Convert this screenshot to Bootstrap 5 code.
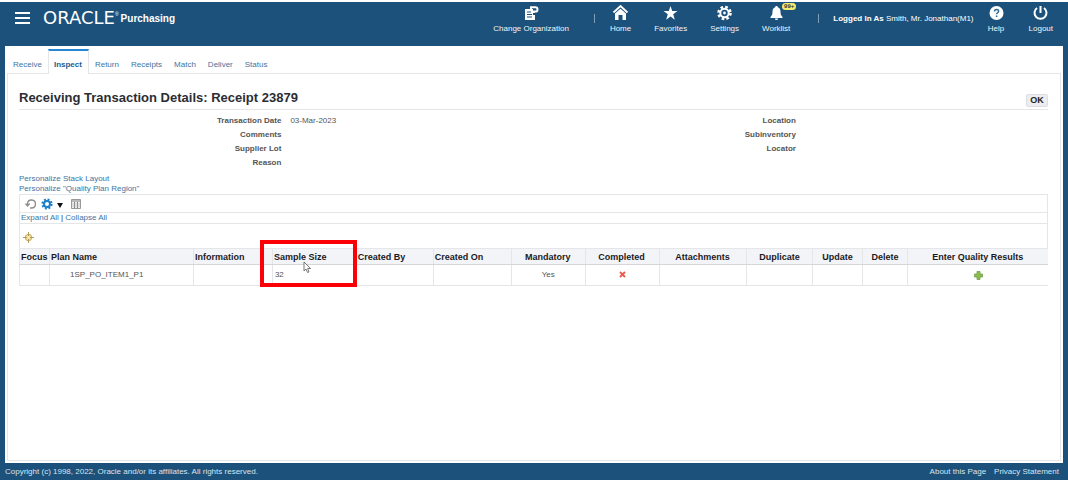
<!DOCTYPE html>
<html lang="en">
<head>
<meta charset="utf-8">
<meta name="viewport" content="width=device-width, initial-scale=1">
<title>Oracle Purchasing - Receiving Transaction Details</title>
<link href="https://cdn.jsdelivr.net/npm/bootstrap@5.3.0/dist/css/bootstrap.min.css" rel="stylesheet">
<style>
  body { font-family: "Liberation Sans", Arial, sans-serif; font-size: 8px; line-height: 10px; color: #555; background: #1c517b; border-top: 2px solid #fff; }
  a { color: #3f749f; text-decoration: none; }
  .topbar { height: 44px; padding: 0 15px; color: #fff; }
  .topbar a { color: #f0f5f9; }
  .menu-btn { width: 15px; height: 12px; border: 0; background: none; margin-top: 10px; }
  .wordmark { font: 18px/20px "DejaVu Sans", Verdana, sans-serif; margin: 6px 0 0 13px; }
  .reg { font-size: 5px; line-height: 5px; margin-top: 10px; }
  .product { font-size: 10px; line-height: 20px; font-weight: bold; margin: 7px 0 0 2px; }
  .actions { gap: 23px; }
  .action { display: flex; flex-direction: column; align-items: center; position: relative; padding-top: 2px; }
  .action svg { margin-bottom: 3px; }
  .divider { width: 1px; height: 9px; background: #7f9db5; margin: 12px -8px 0 2px; }
  .divider:last-child { margin: 12px 0 0 5px; }
  .count { position: absolute; left: 20px; top: 1px; font-size: 6px; line-height: 7px; font-weight: bold; padding: 0 2px; background: #f3ec6c; color: #333; border-radius: 4px; }
  .user { padding-top: 12px; margin: 0 14px; }
  .panel { background: #fff; margin: 0 5px; padding: 3px 2px 2px; }
  .tabs { padding-left: 6px; position: relative; z-index: 1; }
  .tabs a { display: block; height: 25px; padding-top: 11px; margin-right: 12px; }
  .tabs a.current { font-weight: bold; color: #1d5e93; border: 1px solid #e3e6e8; border-top: 2px solid #2688d4; border-bottom: 0; background: #fff; padding: 9px 6px 0 5px; margin: 0 6px 0 -6px; }
  .content { border: 1px solid #e4e7ea; padding: 15px 12px 0 11px; margin-top: -1px; }
  .heading { border-bottom: 1px solid #e6e6e6; height: 21px; }
  .heading h1 { font-size: 13px; line-height: 18px; font-weight: bold; color: #2b2d33; margin: 0; }
  .ok-btn { font-size: 9px; line-height: 11px; font-weight: bold; color: #222; background: #ebedf0; border: 1px solid #dcdee1; border-radius: 2px; width: 22px; height: 13px; padding: 0; margin-top: 5px; }
  .facts { padding-top: 4px; min-height: 64px; }
  .facts dl { margin: 0; width: 50%; display: grid; grid-template-columns: 51% 1fr; column-gap: 9px; grid-auto-rows: 14px; align-content: start; line-height: 14px; }
  .facts dt { text-align: right; font-weight: bold; }
  .facts dd { margin: 0; }
  .region { border: 1px solid #e4e6e8; border-bottom: 0; }
  .tools { height: 17px; padding-left: 5px; }
  .icon-btn { border: 0; background: none; padding: 0; display: flex; }
  .expand { border: solid #e4e6e8; border-width: 1px 0; height: 12px; padding-left: 1px; color: #222; }
  .focus-row { height: 24px; padding: 3px 0 0 3px; }
  .plans { width: 100%; table-layout: fixed; border-left: 1px solid #e4e6e8; }
  .plans th { font-size: 9px; height: 16px; padding: 0 2px 0 1px; color: #1b1b1f; background: #f3f4f8; border: 1px solid #e4e6ea; border-bottom-color: #d4d6da; border-width: 1px 0 1px 1px; white-space: nowrap; }
  .plans td { height: 21px; padding: 0 2px; border: 1px solid #e4e6e8; border-width: 0 0 1px 1px; }
  .plans th.c, .plans td.c { text-align: center; }
  .plans td.name { padding-left: 20px; }
  .marked { position: relative; }
  .highlight { position: absolute; left: -13px; top: -9px; width: 97px; height: 47px; border: 4px solid #fb0007; }
  .pointer { position: absolute; left: 30px; top: 12px; }
  .foot { height: 17px; padding: 4px 9px 0 5px; color: #d8e4ee; }
  .foot a { color: #d8e4ee; }
</style>
</head>
<body class="d-flex flex-column min-vh-100">
<header class="topbar d-flex align-items-start">
  <button class="menu-btn p-0 d-flex" type="button" aria-label="Menu">
    <svg width="15" height="12" viewBox="0 0 15 12" fill="#fff"><path d="M0 0h15v2H0zM0 5h15v2H0zM0 10h15v2H0z"/></svg>
  </button>
  <span class="wordmark">ORACLE</span><span class="reg">®</span><span class="product">Purchasing</span>
  <nav class="actions d-flex ms-auto">
    <a class="action" href="#">
      <svg width="17" height="17" viewBox="0 0 17 17"><path fill="#fff" d="M2 5h8v6h2v5H2z"/><path d="M4 8h4M4 10.500h5M4 13h5" stroke="#1c517b"/><path d="M8 5.500V3.200h4.300a2.200 2.200 0 0 1 0 4.400h-1.500V9" fill="none" stroke="#fff" stroke-width="2"/></svg>
      Change Organization</a>
    <span class="divider"></span>
    <a class="action" href="#">
      <svg width="17" height="17" viewBox="0 0 17 17"><path d="M1.500 8.500 8.500 2l7 6.500" fill="none" stroke="#fff" stroke-width="1.800"/><path fill="#fff" d="M3 9.500 8.500 4.800 14 9.500V16h-3.500v-5h-4v5H3z"/></svg>
      Home</a>
    <a class="action" href="#">
      <svg width="17" height="17" viewBox="0 0 17 17"><path fill="#fff" d="m8.500 2 1.700 5h5.300l-4.300 3.300 1.600 5.400-4.300-3.200-4.300 3.200 1.600-5.400L1.500 7h5.300z"/></svg>
      Favorites</a>
    <a class="action" href="#">
      <svg width="17" height="17" viewBox="0 0 17 17"><circle cx="8.500" cy="9" r="6" fill="none" stroke="#fff" stroke-width="2.600" stroke-dasharray="2.600 2.112"/><circle cx="8.500" cy="9" r="4.200" fill="none" stroke="#fff" stroke-width="2"/><circle cx="8.500" cy="9" r="1.400" fill="#fff"/></svg>
      Settings</a>
    <a class="action" href="#">
      <svg width="17" height="17" viewBox="0 0 17 17"><path fill="#fff" d="M8.500 2c1 0 1.300.7 1.300 1.300 2.200.8 2.700 2.500 2.700 4.200 0 2.500.5 4 2 5.500v1h-12v-1c1.500-1.500 2-3 2-5.500 0-1.700.5-3.400 2.700-4.200C7.200 2.700 7.500 2 8.500 2zM7 14.600h3c0 2-3 2-3 0z"/></svg>
      Worklist<span class="count">99+</span></a>
    <span class="divider"></span>
  </nav>
  <span class="user"><b>Logged In As</b> Smith, Mr. Jonathan(M1)</span>
  <nav class="d-flex gap-4">
    <a class="action" href="#">
      <svg width="17" height="17" viewBox="0 0 17 17"><circle cx="8.500" cy="9" r="7" fill="#fff"/><path d="M6.600 7.500c0-2.600 4-2.600 4-.2 0 1.500-2 1.400-2 3M8.600 11.600v1.500" fill="none" stroke="#2b689a" stroke-width="1.500"/></svg>
      Help</a>
    <a class="action" href="#">
      <svg width="17" height="17" viewBox="0 0 17 17" fill="none" stroke="#fff" stroke-width="2"><path d="M5 4a6 6 0 1 0 7 0M8.500 2v7"/></svg>
      Logout</a>
  </nav>
</header>

<main class="panel flex-grow-1 d-flex flex-column">
  <nav class="tabs d-flex">
    <a href="#">Receive</a>
    <a href="#" class="current" aria-current="page">Inspect</a>
    <a href="#">Return</a>
    <a href="#">Receipts</a>
    <a href="#">Match</a>
    <a href="#">Deliver</a>
    <a href="#">Status</a>
  </nav>
  <section class="content flex-grow-1">
    <div class="heading d-flex justify-content-between">
      <h1>Receiving Transaction Details: Receipt 23879</h1>
      <button class="ok-btn" type="button">OK</button>
    </div>
    <div class="facts d-flex">
      <dl>
        <dt>Transaction Date</dt><dd>03-Mar-2023</dd>
        <dt>Comments</dt><dd></dd>
        <dt>Supplier Lot</dt><dd></dd>
        <dt>Reason</dt><dd></dd>
      </dl>
      <dl>
        <dt>Location</dt><dd></dd>
        <dt>Subinventory</dt><dd></dd>
        <dt>Locator</dt><dd></dd>
      </dl>
    </div>
    <div class="d-flex flex-column align-items-start">
      <a href="#">Personalize Stack Layout</a>
      <a href="#">Personalize "Quality Plan Region"</a>
    </div>
    <div class="region">
      <div class="tools d-flex align-items-center gap-1">
        <button class="icon-btn" type="button" aria-label="Reset"><svg width="12" height="12" viewBox="0 0 12 12" fill="none" stroke="#8c8c8c" stroke-width="1.300"><path d="M2.500 7V5.500a4 4 0 1 1 4 4.500H5"/><path d="m.5 5.500 2 2.500 2.200-2.500"/></svg></button>
        <button class="icon-btn" type="button" aria-label="Table settings"><svg width="12" height="12" viewBox="0 0 12 12"><circle cx="6" cy="6" r="4.500" fill="none" stroke="#1b7fca" stroke-width="2.200" stroke-dasharray="1.900 1.634"/><circle cx="6" cy="6" r="3" fill="none" stroke="#1b7fca" stroke-width="2"/></svg></button>
        <button class="icon-btn" type="button" aria-label="More settings"><svg width="6" height="12" viewBox="0 0 6 12"><path d="M0 5h6L3 10z" fill="#111"/></svg></button>
        <button class="icon-btn ms-1" type="button" aria-label="Columns"><svg width="10" height="10" viewBox="0 0 10 10"><path d="M.5.500h9v9h-9z" fill="#ececec" stroke="#999"/><path d="M1 2h8M3.500 3v6M6.500 3v6" stroke="#888"/><path d="M1 5h8M1 7h8" stroke="#bbb" stroke-width=".5"/></svg></button>
      </div>
      <div class="expand"><a href="#">Expand All</a> | <a href="#">Collapse All</a></div>
      <div class="focus-row d-flex align-items-center">
        <button class="icon-btn" type="button" aria-label="Focus"><svg width="11" height="11" viewBox="0 0 11 11"><circle cx="5.500" cy="5.500" r="3.200" fill="#f3e5ad" stroke="#c8a84d"/><path d="M5.500 0v4M5.500 7v4M0 5.500h4M7 5.500h4" stroke="#b59c55"/></svg></button>
      </div>
    </div>
    <table class="plans">
      <colgroup>
        <col style="width:2.92%"><col style="width:13.99%"><col style="width:7.68%"><col style="width:8.16%"><col style="width:7.48%"><col style="width:7.58%"><col style="width:7.19%"><col style="width:7.19%"><col style="width:8.55%"><col style="width:6.41%"><col style="width:4.86%"><col style="width:4.38%"><col style="width:13.61%">
      </colgroup>
      <thead>
        <tr><th>Focus</th><th>Plan Name</th><th>Information</th>
          <th class="marked">Sample Size<span class="highlight"></span>
            <svg class="pointer" width="9" height="13" viewBox="0 0 9 13"><path d="M1 1v9l2-2 1.500 3.500 1.500-.7L4.600 7.500h3z" fill="#fff" stroke="#555" stroke-width=".8"/></svg></th>
          <th>Created By</th><th>Created On</th><th class="c">Mandatory</th><th class="c">Completed</th><th class="c">Attachments</th><th class="c">Duplicate</th><th class="c">Update</th><th class="c">Delete</th><th class="c">Enter Quality Results</th></tr>
      </thead>
      <tbody>
        <tr><td></td><td class="name">1SP_PO_ITEM1_P1</td><td></td><td>32</td><td></td><td></td><td class="c">Yes</td>
          <td class="c"><svg width="7" height="7" viewBox="0 0 7 7" role="img" aria-label="Not completed"><path d="m1 1 5 5M6 1 1 6" stroke="#e8574c" stroke-width="1.800"/></svg></td>
          <td></td><td></td><td></td><td></td>
          <td class="c"><button class="icon-btn mx-auto" type="button" aria-label="Enter results"><svg width="9" height="9" viewBox="0 0 9 9"><path d="M3 .500h3V3h2.500v3H6v2.500H3V6H.500V3H3z" fill="#8dbb4e" stroke="#71a04a" stroke-width=".8"/></svg></button></td></tr>
      </tbody>
    </table>
  </section>
</main>
<footer class="foot d-flex justify-content-between">
  <span>Copyright (c) 1998, 2022, Oracle and/or its affiliates. All rights reserved.</span>
  <span class="d-flex gap-2"><a href="#">About this Page</a><a href="#">Privacy Statement</a></span>
</footer>
<script src="https://cdn.jsdelivr.net/npm/bootstrap@5.3.0/dist/js/bootstrap.bundle.min.js"></script>
</body>
</html>
